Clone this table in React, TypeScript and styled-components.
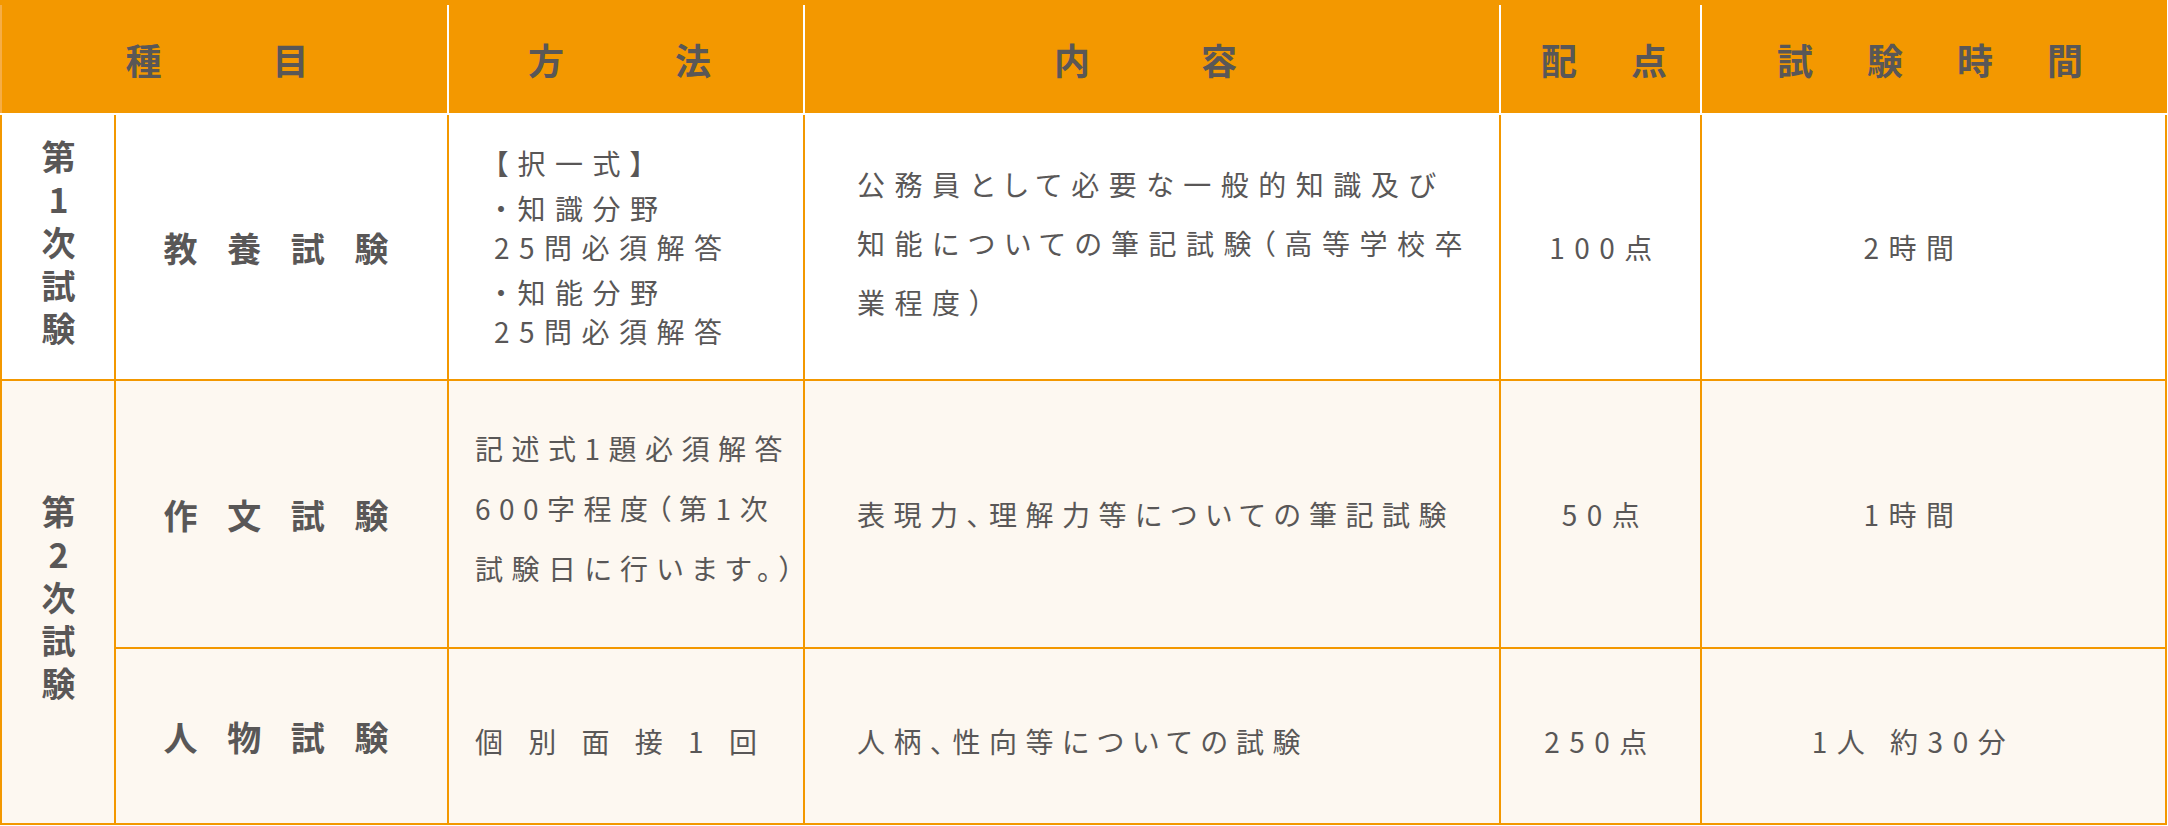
import styled, { createGlobalStyle } from "styled-components";

const ORANGE = "#f39800";
const INK = "#595757";
const CREAM = "#fdf8f1";

const GlobalStyle = createGlobalStyle`
  html, body {
    margin: 0;
    padding: 0;
    background: #fff;
  }
  body {
    font-family: "Noto Sans CJK JP", "Noto Sans", sans-serif;
    color: ${INK};
  }
`;

const Table = styled.div`
  width: 2167px;
`;

const Head = styled.div`
  display: grid;
  grid-template-columns: 447px 354px 694px 199px 465px;
  column-gap: 2px;
  background: #fff;
  border-top: 5px solid ${ORANGE};
`;

const HeadCell = styled.div<{ $spacing: number; $edge?: boolean; $shift?: number }>`
  height: 108px;
  display: flex;
  align-items: center;
  justify-content: center;
  padding-left: ${(p) => p.$shift || 0}px;
  box-sizing: border-box;
  background: ${ORANGE};
  box-shadow: ${(p) => (p.$edge ? "inset 2px 0 0 #f6ad45" : "none")};
  font-size: 36px;
  font-weight: 700;
  letter-spacing: ${(p) => p.$spacing}px;
  white-space: pre;
`;

const Body = styled.div`
  display: grid;
  grid-template-columns: 112px 331px 354px 694px 199px 463px;
  grid-template-rows: 264px 266px 174px;
  gap: 2px;
  margin-top: 2px;
  padding: 0 2px 2px;
  background: ${ORANGE};
`;

type Align = "start" | "center";

const Cell = styled.div<{
  $cream?: boolean;
  $align?: Align;
  $rows?: number;
  $pad?: string;
}>`
  display: flex;
  align-items: center;
  justify-content: ${(p) => (p.$align === "start" ? "flex-start" : "center")};
  grid-row: ${(p) => (p.$rows ? `span ${p.$rows}` : "auto")};
  padding: ${(p) => p.$pad || "0"};
  background: ${(p) => (p.$cream ? CREAM : "#fff")};
  box-sizing: border-box;
`;

const Stage = styled.span`
  writing-mode: vertical-rl;
  text-orientation: upright;
  font-size: 34px;
  font-weight: 700;
  letter-spacing: 9px;
  line-height: 1;
`;

const Subject = styled.span`
  font-size: 34px;
  font-weight: 700;
  letter-spacing: 11px;
  white-space: pre;
`;

const Copy = styled.div<{ $lh: number; $ls?: number }>`
  font-size: 28px;
  letter-spacing: ${(p) => p.$ls ?? 9.5}px;
  line-height: ${(p) => p.$lh}px;
  white-space: pre;
  font-feature-settings: "palt";
`;

const Block = styled.div`
  & + & {
    margin-top: 6px;
  }
`;

export default function App() {
  return (
    <>
      <GlobalStyle />
      <Table>
        <Head>
          <HeadCell $spacing={13} $edge>
            種　　目
          </HeadCell>
          <HeadCell $spacing={13}>方　　法</HeadCell>
          <HeadCell $spacing={13}>内　　容</HeadCell>
          <HeadCell $spacing={9} $shift={16}>
            配　点
          </HeadCell>
          <HeadCell $spacing={9}>試　験　時　間</HeadCell>
        </Head>

        <Body>
          <Cell>
            <Stage>第1次試験</Stage>
          </Cell>
          <Cell>
            <Subject>教 養 試 験</Subject>
          </Cell>
          <Cell $align="start" $pad="0 0 0 45px">
            <Copy $lh={39}>
              <Block>【択一式】</Block>
              <Block>
                ・知識分野
                <br />
                25問必須解答
              </Block>
              <Block>
                ・知能分野
                <br />
                25問必須解答
              </Block>
            </Copy>
          </Cell>
          <Cell $align="start" $pad="0 0 8px 52px">
            <Copy $lh={59}>
              公務員として必要な一般的知識及び
              <br />
              知能についての筆記試験（高等学校卒
              <br />
              業程度）
            </Copy>
          </Cell>
          <Cell $pad="0 0 0 10px">
            <Copy $lh={40}>100点</Copy>
          </Cell>
          <Cell $pad="0 40px 0 0">
            <Copy $lh={40}>2時間</Copy>
          </Cell>

          <Cell $cream $rows={2}>
            <Stage>第2次試験</Stage>
          </Cell>
          <Cell $cream>
            <Subject>作 文 試 験</Subject>
          </Cell>
          <Cell $cream $align="start" $pad="0 0 12px 26px">
            <Copy $lh={60} $ls={8.5}>
              記述式1題必須解答
              <br />
              600字程度（第1次
              <br />
              試験日に行います。）
            </Copy>
          </Cell>
          <Cell $cream $align="start" $pad="0 0 0 52px">
            <Copy $lh={40} $ls={8.5}>
              表現力、理解力等についての筆記試験
            </Copy>
          </Cell>
          <Cell $cream $pad="0 0 0 10px">
            <Copy $lh={40}>50点</Copy>
          </Cell>
          <Cell $cream $pad="0 40px 0 0">
            <Copy $lh={40}>1時間</Copy>
          </Cell>

          <Cell $cream>
            <Subject>人 物 試 験</Subject>
          </Cell>
          <Cell $cream $align="start" $pad="10px 0 0 26px">
            <Copy $lh={40}>個 別 面 接 1 回</Copy>
          </Cell>
          <Cell $cream $align="start" $pad="10px 0 0 52px">
            <Copy $lh={40} $ls={8.5}>
              人柄、性向等についての試験
            </Copy>
          </Cell>
          <Cell $cream $pad="10px 0 0 0">
            <Copy $lh={40}>250点</Copy>
          </Cell>
          <Cell $cream $pad="10px 40px 0 0">
            <Copy $lh={40}>1人 約30分</Copy>
          </Cell>
        </Body>
      </Table>
    </>
  );
}
